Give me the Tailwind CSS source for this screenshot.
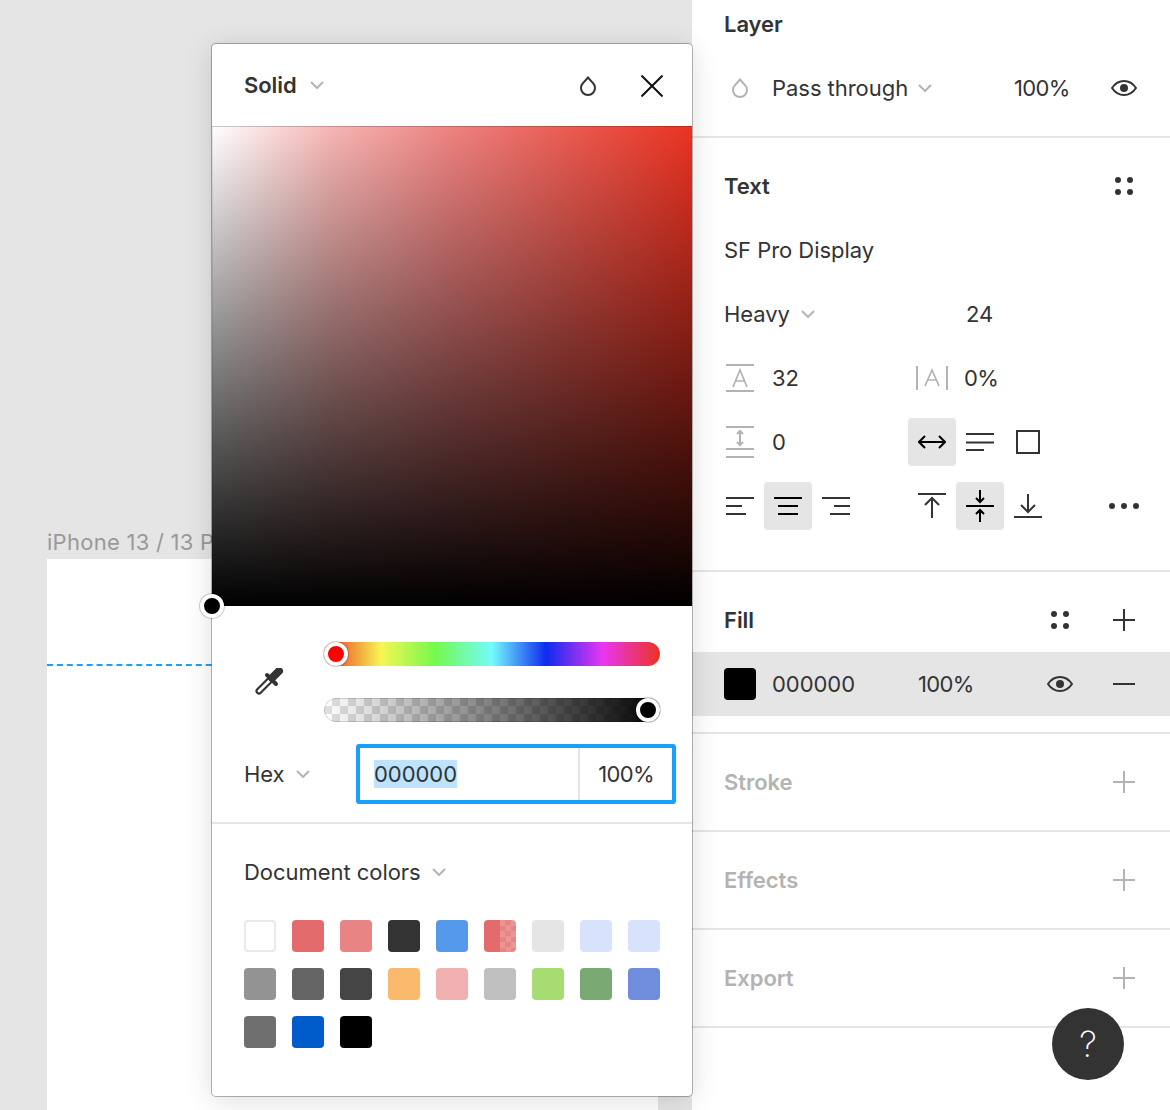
<!DOCTYPE html>
<html>
<head>
<meta charset="utf-8">
<script src="https://cdn.jsdelivr.net/npm/@tailwindcss/browser@4"></script>
</head>
<body class="m-0 bg-white">
<div class="relative flex w-[1170px] h-[1110px] overflow-hidden antialiased [font-family:Inter,sans-serif] text-[22px] leading-8 text-[#333] tracking-[-0.002em]">

  <!-- Canvas -->
  <div class="relative w-[692px] h-full bg-[#e5e5e5] overflow-hidden">
    <div class="absolute left-[47px] top-[526px] text-[#999] whitespace-nowrap tracking-[0.012em]">iPhone 13 / 13 Pro</div>
    <div class="absolute left-[47px] top-[559px] w-[611px] h-[551px] bg-white">
      <div class="mt-[105px] border-t-2 border-dashed border-[#18a0fb]"></div>
    </div>
  </div>

  <!-- Right panel -->
  <div class="w-[478px] h-full bg-white">
    <!-- Layer -->
    <section class="h-[136px] pl-8">
      <div class="h-12 flex items-center font-semibold">Layer</div>
      <div class="mt-2 h-16 flex items-center">
        <div class="w-8 flex justify-center"><svg width="16" height="20" viewBox="0 0 16 20" fill="none" stroke="#b3b3b3" stroke-width="2"><path d="M8 1.5L3.05 7.05A7 7 0 1 0 12.95 7.05Z"/></svg></div>
        <span class="ml-4">Pass through</span>
        <svg class="ml-[10px]" width="14" height="8" viewBox="0 0 14 8" fill="none" stroke="#b3b3b3" stroke-width="2"><path d="M1 1L7 7L13 1"/></svg>
        <span class="absolute left-[1014px] tracking-[-0.03em]">100%</span>
        <svg class="absolute left-[1111px]" width="26" height="16" viewBox="0 0 26 16" fill="none" stroke="#333" stroke-width="2"><path d="M1 8C4 3.5 8.5 1 13 1S22 3.5 25 8C22 12.5 17.500 15 13 15S4 12.500 1 8Z"/><circle cx="13" cy="8" r="4" fill="#333" stroke="none"/></svg>
      </div>
    </section>
    <div class="h-0.5 bg-[#e5e5e5]"></div>

    <!-- Text -->
    <section class="h-[432px] pt-4 pl-8">
      <div class="h-16 flex items-center font-semibold justify-between pr-9">
        <span>Text</span>
        <svg width="20" height="20" viewBox="0 0 20 20" fill="#333"><circle cx="4" cy="4" r="3"/><circle cx="16" cy="4" r="3"/><circle cx="4" cy="16" r="3"/><circle cx="16" cy="16" r="3"/></svg>
      </div>
      <div class="h-16 flex items-center">SF Pro Display</div>
      <div class="h-16 flex items-center">
        <span>Heavy</span>
        <svg class="ml-[11px]" width="14" height="8" viewBox="0 0 14 8" fill="none" stroke="#b3b3b3" stroke-width="2"><path d="M1 1L7 7L13 1"/></svg>
        <span class="absolute left-[966px]">24</span>
      </div>
      <div class="h-16 flex items-center">
        <svg width="32" height="32" viewBox="0 0 32 32" fill="none" stroke="#b3b3b3" stroke-width="2"><path d="M2 3H30M2 29H30"/><path d="M9 25L16 8L23 25M11.500 19H20.500" stroke-width="1.700"/></svg>
        <span class="ml-4">32</span>
        <svg class="absolute left-[914px]" width="36" height="32" viewBox="0 0 36 32" fill="none" stroke="#b3b3b3" stroke-width="2"><path d="M3 4V28M33 4V28"/><path d="M11 24L18 8L25 24M13.500 18H22.500" stroke-width="1.700"/></svg>
        <span class="absolute left-[964px] tracking-[-0.03em]">0%</span>
      </div>
      <div class="h-16 flex items-center">
        <svg width="32" height="32" viewBox="0 0 32 32" fill="none" stroke="#b3b3b3" stroke-width="2"><path d="M2 1H30M2 23H30M2 31H30"/><path d="M16 5V19M13 8L16 5L19 8M13 16L16 19L19 16"/></svg>
        <span class="ml-4">0</span>
        <div class="absolute left-[908px] w-12 h-12 rounded bg-[#e5e5e5] flex items-center justify-center">
          <svg width="28" height="14" viewBox="0 0 28 14" fill="none" stroke="#000" stroke-width="2"><path d="M1 7H27M7 1L1 7L7 13M21 1L27 7L21 13"/></svg>
        </div>
        <svg class="absolute left-[966px]" width="28" height="20" viewBox="0 0 28 20" fill="none" stroke="#333" stroke-width="2"><path d="M0 2H28M0 10.500H28M0 18H18"/></svg>
        <svg class="absolute left-[1016px]" width="24" height="24" viewBox="0 0 24 24" fill="none" stroke="#333" stroke-width="2"><rect x="1" y="1" width="22" height="22"/></svg>
      </div>
      <div class="h-16 flex items-center">
        <svg class="ml-0.5" width="28" height="18" viewBox="0 0 28 18" fill="none" stroke="#333" stroke-width="2"><path d="M0 1H28M0 9H16M0 17H20"/></svg>
        <div class="absolute left-[764px] w-12 h-12 rounded bg-[#e5e5e5] flex items-center justify-center">
          <svg width="28" height="18" viewBox="0 0 28 18" fill="none" stroke="#000" stroke-width="2"><path d="M0 1H28M4 9H24M4 17H24"/></svg>
        </div>
        <svg class="absolute left-[822px]" width="28" height="18" viewBox="0 0 28 18" fill="none" stroke="#333" stroke-width="2"><path d="M0 1H28M12 9H28M8 17H28"/></svg>
        <svg class="absolute left-[918px]" width="28" height="26" viewBox="0 0 28 26" fill="none" stroke="#333" stroke-width="2"><path d="M0 1H28M14 25V6M7 12L14 5L21 12"/></svg>
        <div class="absolute left-[956px] w-12 h-12 rounded bg-[#e5e5e5] flex items-center justify-center">
          <svg width="28" height="32" viewBox="0 0 28 32" fill="none" stroke="#000" stroke-width="2"><path d="M0 16H28M14 0V12M10 8L14 12L18 8M14 32V20M10 24L14 20L18 24"/></svg>
        </div>
        <svg class="absolute left-[1014px]" width="28" height="24" viewBox="0 0 28 24" fill="none" stroke="#333" stroke-width="2"><path d="M0 23H28M14 0V18M7 11L14 18L21 11"/></svg>
        <svg class="absolute left-[1108px]" width="32" height="8" viewBox="0 0 32 8" fill="#333"><circle cx="4" cy="4" r="3"/><circle cx="16" cy="4" r="3"/><circle cx="28" cy="4" r="3"/></svg>
      </div>
    </section>
    <div class="h-0.5 bg-[#e5e5e5]"></div>

    <!-- Fill -->
    <section class="h-[160px] pt-4">
      <div class="h-16 pl-8 flex items-center font-semibold">
        <span>Fill</span>
        <svg class="absolute left-[1050px]" width="20" height="20" viewBox="0 0 20 20" fill="#333"><circle cx="4" cy="4" r="3"/><circle cx="16" cy="4" r="3"/><circle cx="4" cy="16" r="3"/><circle cx="16" cy="16" r="3"/></svg>
        <svg class="absolute left-[1113px]" width="22" height="22" viewBox="0 0 22 22" fill="none" stroke="#333" stroke-width="2"><path d="M0 11H22M11 0V22"/></svg>
      </div>
      <div class="h-16 pl-8 flex items-center bg-[#e5e5e5]">
        <div class="w-8 h-8 rounded-sm bg-black"></div>
        <span class="ml-4">000000</span>
        <span class="absolute left-[918px] tracking-[-0.03em]">100%</span>
        <svg class="absolute left-[1047px]" width="26" height="16" viewBox="0 0 26 16" fill="none" stroke="#333" stroke-width="2"><path d="M1 8C4 3.500 8.500 1 13 1S22 3.500 25 8C22 12.500 17.500 15 13 15S4 12.500 1 8Z"/><circle cx="13" cy="8" r="4" fill="#333" stroke="none"/></svg>
        <svg class="absolute left-[1113px]" width="22" height="2" viewBox="0 0 22 2" fill="none" stroke="#333" stroke-width="2"><path d="M0 1H22"/></svg>
      </div>
    </section>
    <div class="h-0.5 bg-[#e5e5e5]"></div>

    <!-- Stroke -->
    <section class="h-24 pl-8 flex items-center font-semibold text-[#b3b3b3]">
      <span>Stroke</span>
      <svg class="absolute left-[1113px]" width="22" height="22" viewBox="0 0 22 22" fill="none" stroke="#b3b3b3" stroke-width="2"><path d="M0 11H22M11 0V22"/></svg>
    </section>
    <div class="h-0.5 bg-[#e5e5e5]"></div>
    <!-- Effects -->
    <section class="h-24 pl-8 flex items-center font-semibold text-[#b3b3b3]">
      <span>Effects</span>
      <svg class="absolute left-[1113px]" width="22" height="22" viewBox="0 0 22 22" fill="none" stroke="#b3b3b3" stroke-width="2"><path d="M0 11H22M11 0V22"/></svg>
    </section>
    <div class="h-0.5 bg-[#e5e5e5]"></div>
    <!-- Export -->
    <section class="h-24 pl-8 flex items-center font-semibold text-[#b3b3b3]">
      <span>Export</span>
      <svg class="absolute left-[1113px]" width="22" height="22" viewBox="0 0 22 22" fill="none" stroke="#b3b3b3" stroke-width="2"><path d="M0 11H22M11 0V22"/></svg>
    </section>
    <div class="h-0.5 bg-[#e5e5e5]"></div>
  </div>

  <!-- Help -->
  <div class="absolute left-[1052px] top-[1008px] w-[72px] h-[72px] rounded-full bg-[#333] flex items-center justify-center text-white font-extralight text-[36px]">?</div>

  <!-- Color popover -->
  <div class="absolute left-[212px] top-[44px] w-[480px] h-[1052px] bg-white rounded shadow-[0_4px_28px_rgba(0,0,0,0.14),0_0_0_1px_rgba(0,0,0,0.28)]">
    <div class="h-[82px] pl-8 flex items-center font-semibold rounded-t">
      <span>Solid</span>
      <svg class="ml-[13px]" width="14" height="8" viewBox="0 0 14 8" fill="none" stroke="#b3b3b3" stroke-width="2"><path d="M1 1L7 7L13 1"/></svg>
      <svg class="absolute left-[368px] top-[32px]" width="16" height="20" viewBox="0 0 16 20" fill="none" stroke="#333" stroke-width="2"><path d="M8 1.500L3.050 7.050A7 7 0 1 0 12.950 7.050Z"/></svg>
      <svg class="absolute left-[429px] top-[31px]" width="22" height="22" viewBox="0 0 22 22" fill="none" stroke="#111" stroke-width="2"><path d="M0.500 0.500L21.500 21.500M21.500 0.500L0.500 21.500"/></svg>
    </div>

    <div class="relative h-[480px] shadow-[inset_0_1px_0_rgba(0,0,0,0.2),inset_1px_0_0_rgba(0,0,0,0.08)] bg-[linear-gradient(to_top,#000,transparent),linear-gradient(to_right,#fff,#f6b5b3_25%,#ee8280_50%,#ea5a50_75%,#ea3323)]">
      <div class="absolute left-[-12px] bottom-[-12px] w-6 h-6 rounded-full bg-black border-4 border-white shadow-[0_0_0_1px_rgba(0,0,0,0.2)]"></div>
    </div>

    <div class="flex pl-8 pt-9">
      <div class="w-20 flex items-center">
        <svg class="ml-[10px]" width="32" height="28" viewBox="0 0 32 28" fill="none">
          <path d="M5 23L17 11" stroke="#333" stroke-width="7" stroke-linecap="round"/>
          <path d="M5 23L15 13" stroke="#fff" stroke-width="2.800" stroke-linecap="round"/>
          <path d="M13 7L22 16" stroke="#333" stroke-width="4" stroke-linecap="round"/>
          <path d="M18 10L25 3" stroke="#333" stroke-width="8" stroke-linecap="round"/>
        </svg>
      </div>
      <div class="w-[336px] flex flex-col gap-8">
        <div class="relative h-6 rounded-full bg-[linear-gradient(to_right,#ea3323,#f6f653_17%,#75f94d_33%,#73fbfd_50%,#0f2bf0_66%,#ea36f0_83%,#ea3323)]">
          <div class="absolute left-0 top-0 w-6 h-6 rounded-full bg-[#ff0000] border-4 border-white shadow-[0_0_0_1px_rgba(0,0,0,0.2)]"></div>
        </div>
        <div class="relative h-6 rounded-full shadow-[inset_0_0_0_1px_rgba(0,0,0,0.15)] [background:linear-gradient(to_right,transparent,#000),repeating-conic-gradient(#e0e0e0_0_25%,#fff_0_50%)_0_0/16px_16px]">
          <div class="absolute right-0 top-0 w-6 h-6 rounded-full bg-black border-4 border-white shadow-[0_0_0_1px_rgba(0,0,0,0.2)]"></div>
        </div>
      </div>
    </div>

    <div class="mt-[22px] pl-8 flex items-center">
      <span>Hex</span>
      <svg class="ml-[11px]" width="14" height="8" viewBox="0 0 14 8" fill="none" stroke="#b3b3b3" stroke-width="2"><path d="M1 1L7 7L13 1"/></svg>
      <div class="absolute left-[144px] w-80 h-[60px] flex border-4 border-[#18a0fb] rounded-[3px]">
        <div class="w-[218px] pl-[14px] flex items-center"><span class="bg-[#bde3ff] h-7 flex items-center">000000</span></div>
        <div class="flex-1 border-l-2 border-[#e5e5e5] flex items-center justify-center tracking-[-0.03em]">100%</div>
      </div>
      <div class="h-[60px]"></div>
    </div>

    <div class="mt-[18px] h-0.5 bg-[#e5e5e5]"></div>

    <div class="mt-6 h-12 pl-8 flex items-center">
      <span>Document colors</span>
      <svg class="ml-[11px]" width="14" height="8" viewBox="0 0 14 8" fill="none" stroke="#b3b3b3" stroke-width="2"><path d="M1 1L7 7L13 1"/></svg>
    </div>

    <div class="mt-6 ml-8 w-[416px] grid grid-cols-9 gap-4">
      <div class="h-8 rounded-sm bg-white border-2 border-[#e9e9e9]"></div>
      <div class="h-8 rounded-sm bg-[#e36b6b]"></div>
      <div class="h-8 rounded-sm bg-[#e88484]"></div>
      <div class="h-8 rounded-sm bg-[#333333]"></div>
      <div class="h-8 rounded-sm bg-[#5599ea]"></div>
      <div class="h-8 rounded-sm overflow-hidden flex">
        <div class="w-4 bg-[#e36b6b]"></div>
        <div class="w-4 [background:repeating-conic-gradient(#e68585_0_25%,#ec9595_0_50%)_0_0/11px_11px]"></div>
      </div>
      <div class="h-8 rounded-sm bg-[#e5e5e5]"></div>
      <div class="h-8 rounded-sm bg-[#d9e2fc]"></div>
      <div class="h-8 rounded-sm bg-[#d9e2fc]"></div>

      <div class="h-8 rounded-sm bg-[#949394]"></div>
      <div class="h-8 rounded-sm bg-[#666566]"></div>
      <div class="h-8 rounded-sm bg-[#454545]"></div>
      <div class="h-8 rounded-sm bg-[#f9ba6e]"></div>
      <div class="h-8 rounded-sm bg-[#f1b0b0]"></div>
      <div class="h-8 rounded-sm bg-[#c0c0c0]"></div>
      <div class="h-8 rounded-sm bg-[#a7dc72]"></div>
      <div class="h-8 rounded-sm bg-[#7aa973]"></div>
      <div class="h-8 rounded-sm bg-[#708cdc]"></div>

      <div class="h-8 rounded-sm bg-[#6f6f6f]"></div>
      <div class="h-8 rounded-sm bg-[#015ccb]"></div>
      <div class="h-8 rounded-sm bg-black"></div>
    </div>
  </div>
</div>
</body>
</html>
